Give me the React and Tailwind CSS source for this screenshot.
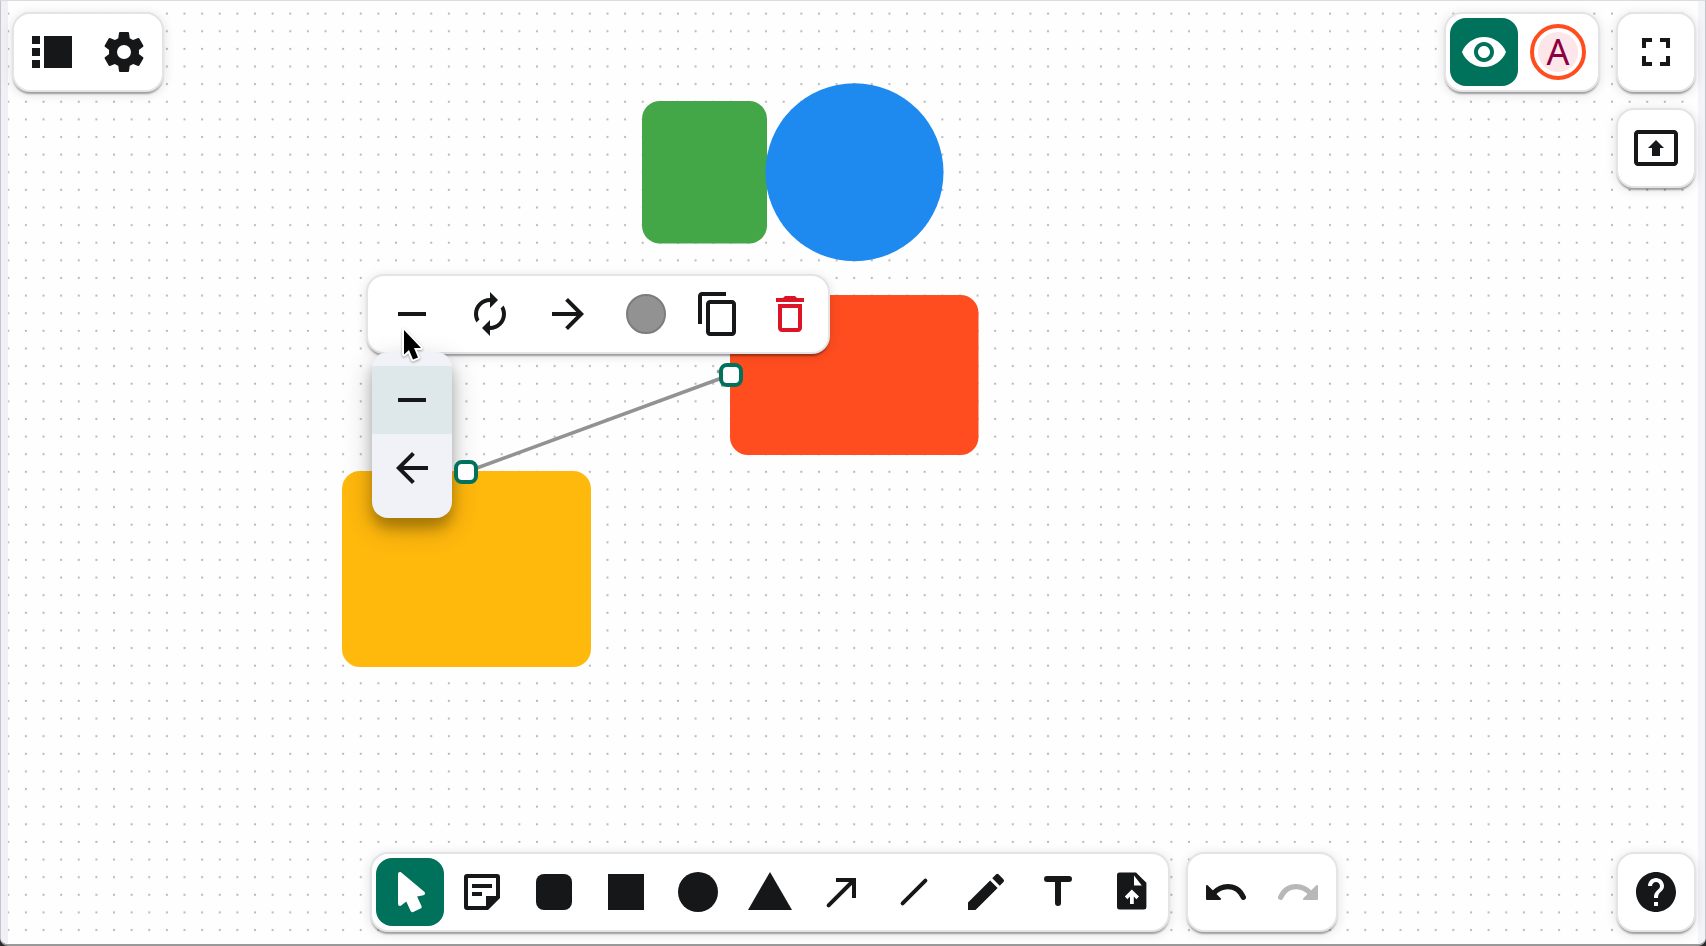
import React from "react";
import {
  MdVisibility, MdFullscreen, MdPresentToAll, MdRemove, MdAutorenew,
  MdArrowForward, MdArrowBack, MdContentCopy, MdDeleteOutline, MdEdit, MdHelp,
} from "react-icons/md";

function Glyph({ children, className = "" }) {
  return (
    <svg viewBox="0 0 24 24" fill="currentColor" aria-hidden="true" className={`size-12 ${className}`}>
      {children}
    </svg>
  );
}

const stroke = { fill: "none", stroke: "currentColor", strokeWidth: 2, strokeLinecap: "round" };

const SidebarIcon = () => (
  <Glyph>
    <path d="M2 4h4v4H2zM2 10h4v4H2zM2 16h4v4H2zM8 4h14v16H8z" />
  </Glyph>
);

const CogIcon = () => (
  <Glyph>
    <path d="M12,15.5A3.5,3.5 0 0,1 8.5,12A3.5,3.5 0 0,1 12,8.5A3.5,3.5 0 0,1 15.5,12A3.5,3.5 0 0,1 12,15.5M19.43,12.97C19.47,12.65 19.5,12.33 19.5,12C19.5,11.67 19.47,11.34 19.43,11L21.54,9.37C21.73,9.22 21.78,8.95 21.66,8.73L19.66,5.27C19.54,5.05 19.27,4.96 19.05,5.05L16.56,6.05C16.04,5.66 15.5,5.32 14.87,5.07L14.5,2.42C14.46,2.18 14.25,2 14,2H10C9.75,2 9.54,2.18 9.5,2.42L9.13,5.07C8.5,5.32 7.96,5.66 7.44,6.05L4.95,5.05C4.73,4.96 4.46,5.05 4.34,5.27L2.34,8.73C2.21,8.95 2.27,9.22 2.46,9.37L4.57,11C4.53,11.34 4.5,11.67 4.5,12C4.5,12.33 4.53,12.65 4.57,12.97L2.46,14.63C2.27,14.78 2.21,15.05 2.34,15.27L4.34,18.73C4.46,18.95 4.73,19.03 4.95,18.95L7.44,17.94C7.96,18.34 8.5,18.68 9.13,18.93L9.5,21.58C9.54,21.82 9.75,22 10,22H14C14.25,22 14.46,21.82 14.5,21.58L14.87,18.93C15.5,18.67 16.04,18.34 16.56,17.94L19.05,18.95C19.27,19.03 19.54,18.95 19.66,18.73L21.66,15.27C21.78,15.05 21.73,14.78 21.54,14.63L19.43,12.97Z" />
  </Glyph>
);

const PointerIcon = () => (
  <Glyph>
    <path d="M13.64,21.97C13.14,22.21 12.54,22 12.31,21.5L10.13,16.76L7.62,18.78C7.45,18.92 7.24,19 7,19A1,1 0 0,1 6,18V3A1,1 0 0,1 7,2C7.24,2 7.47,2.09 7.64,2.23L7.65,2.22L19.14,11.86C19.57,12.22 19.62,12.85 19.27,13.27C19.12,13.45 18.91,13.57 18.7,13.61L15.54,14.23L17.74,18.96C18,19.46 17.76,20.05 17.26,20.28L13.64,21.97Z" />
  </Glyph>
);

const NoteIcon = () => (
  <Glyph>
    <path
      fillRule="evenodd"
      d="M4.5 3h15A1.5 1.5 0 0 1 21 4.500V15l-6 6H4.500A1.500 1.500 0 0 1 3 19.500V4.500A1.500 1.500 0 0 1 4.500 3zM5 5v14h9v-5h5V5zM7 8h10v2H7zM7 12h5v2H7z"
    />
  </Glyph>
);

const RoundedIcon = () => <Glyph><rect x="3" y="3" width="18" height="18" rx="4" /></Glyph>;
const SquareIcon = () => <Glyph><path d="M3 3h18v18H3z" /></Glyph>;
const CircleIcon = () => <Glyph><circle cx="12" cy="12" r="10" /></Glyph>;
const TriangleIcon = () => <Glyph><path d="M1 21h22L12 2" /></Glyph>;

const ArrowIcon = () => (
  <Glyph>
    <path d="M9 5h10v10h-2V7H9z" />
    <path d="M5.300 18.700 17.500 6.500" {...stroke} />
  </Glyph>
);

const LineIcon = () => <Glyph><path d="M6.300 17.700 17.700 6.300" {...stroke} /></Glyph>;

const TextIcon = () => (
  <Glyph>
    <path d="M6.500 5.500h11M12 5.500v12" {...stroke} strokeWidth={3} />
  </Glyph>
);

const UploadIcon = () => (
  <Glyph>
    <path
      fillRule="evenodd"
      d="M6.700 2.200h8.300l5.200 5.200v12.200a1.200 1.200 0 0 1-1.200 1.200H6.700a1.200 1.200 0 0 1-1.200-1.200V3.400a1.200 1.200 0 0 1 1.200-1.200zM14 3.800v5h3.900zM12.900 10.800l-3.500 3.500 1.300 1.300 1.300-1.300V18h1.900v-3.700l1.300 1.300 1.300-1.300z"
    />
  </Glyph>
);

const UndoIcon = ({ className }) => (
  <Glyph className={className}>
    <path d="M2.500 9v6.500H9z" stroke="currentColor" strokeLinejoin="round" />
    <path d="M5.500 12.800C8 10.200 10.500 9.300 12.800 9.300c3.700 0 6.500 2.200 7.900 5.400" {...stroke} strokeWidth={2.600} />
  </Glyph>
);

function Panel({ className = "", label, children }) {
  return (
    <div
      role="toolbar"
      aria-label={label}
      className={`flex w-fit rounded-2xl bg-white p-1 shadow-[0_0_0_2px_#e4e4e8,0_3px_2px_1px_rgba(0,0,0,0.34),0_2px_12px_2px_rgba(0,0,0,0.12)] ${className}`}
    >
      {children}
    </div>
  );
}

function IconButton({ label, active = false, className = "", children, ...rest }) {
  return (
    <button
      type="button"
      aria-label={label}
      className={`flex size-17 shrink-0 items-center justify-center rounded-2xl ${active ? "bg-[#00715a] text-white" : ""} ${className}`}
      {...rest}
    >
      {children}
    </button>
  );
}

const tools = [
  ["Select", PointerIcon],
  ["Sticky note", NoteIcon],
  ["Rounded rectangle", RoundedIcon],
  ["Rectangle", SquareIcon],
  ["Circle", CircleIcon],
  ["Triangle", TriangleIcon],
  ["Arrow", ArrowIcon],
  ["Line", LineIcon],
  ["Pen", () => <MdEdit size={48} />],
  ["Text", TextIcon],
  ["Upload file", UploadIcon],
];

function Drawing() {
  return (
    <svg className="absolute inset-0 size-full" aria-hidden="true">
      <defs>
        <pattern id="dots" x="17.100" y="4.900" width="17.623" height="17.623" patternUnits="userSpaceOnUse">
          <circle cx="8.800" cy="8.800" r="1.100" fill="#b4b4b4" />
        </pattern>
      </defs>
      <rect x="8" width="100%" height="100%" fill="url(#dots)" />
      <rect x="642" y="101" width="125" height="142.500" rx="18" fill="#43a647" />
      <circle cx="854.500" cy="172.300" r="89" fill="#1e8af0" />
      <rect x="730" y="295" width="248.500" height="160" rx="18" fill="#ff4d1f" />
      <rect x="342" y="471" width="249" height="196" rx="18" fill="#ffb80c" />
      <path d="M466 472 730 375" stroke="#929292" strokeWidth="3.500" />
      <path d="M718.500 371.500 730 375 722.500 385" fill="none" stroke="#929292" strokeWidth="3.500" strokeLinecap="round" />
    </svg>
  );
}

function Selection() {
  return (
    <>
      <div className="absolute left-[368px] top-[276px]">
        <Panel label="Connector" className="gap-1">
          <div className="flex gap-2.5 pl-1.5">
            <IconButton label="Line start" aria-expanded="true"><MdRemove size={48} /></IconButton>
            <IconButton label="Line shape"><MdAutorenew size={48} /></IconButton>
            <IconButton label="Line end"><MdArrowForward size={48} /></IconButton>
            <IconButton label="Colour">
              <span className="size-10 rounded-full border-2 border-[#7c7c7c] bg-[#929292]" />
            </IconButton>
          </div>
          <IconButton label="Duplicate"><MdContentCopy size={48} /></IconButton>
          <IconButton label="Delete" className="text-[#dc1426]"><MdDeleteOutline size={48} /></IconButton>
        </Panel>
      </div>
      <div
        role="menu"
        aria-label="Line start"
        className="absolute left-[372px] top-[352px] flex w-20 flex-col rounded-2xl bg-[#f1f2f7] pb-4 pt-3.5 shadow-[0_10px_12px_rgba(0,0,0,0.2),0_10px_28px_rgba(0,0,0,0.24)]"
      >
        <button type="button" role="menuitem" aria-label="None" className="flex h-17 items-center justify-center bg-[#dee7ea]">
          <MdRemove size={48} />
        </button>
        <button type="button" role="menuitem" aria-label="Arrow" className="flex h-17 items-center justify-center">
          <MdArrowBack size={48} />
        </button>
      </div>
      <span className="absolute left-[454px] top-[460px] size-6 rounded-lg border-4 border-[#00715a] bg-white" />
      <span className="absolute left-[719px] top-[363px] size-6 rounded-lg border-4 border-[#00715a] bg-white" />
      <svg viewBox="0 0 26 40" className="absolute left-[400px] top-[325px] h-10 w-[26px] drop-shadow-[0_1px_1px_rgba(0,0,0,0.35)]" aria-hidden="true">
        <path
          d="M4 5v24.500l5-4.500 4 9.500 5-2-4-9.500h7z"
          fill="#000"
          stroke="#fff"
          strokeWidth="4"
          strokeLinejoin="round"
          paintOrder="stroke"
        />
      </svg>
    </>
  );
}

export default function App() {
  return (
    <div className="bg-[#2a2a2a]">
      <div className="relative flex min-h-screen flex-col justify-between overflow-hidden rounded-b-lg border-b-2 border-l border-r border-t border-b-[#999] border-l-[#c4c4cc] border-r-[#c4c4cc] border-t-[#dcdcdf] bg-[#fefefe] font-[Roboto,sans-serif] text-[#151718]">
        <main aria-label="Whiteboard" className="absolute -left-px -top-px h-screen w-screen">
          <Drawing />
          <Selection />
        </main>
        <div className="pointer-events-none absolute inset-y-0 left-0 w-[7px] bg-[#f0f0f6]" />
        <div className="pointer-events-none absolute inset-y-0 right-0 w-[7px] bg-[#f3f3f9]" />

        <header className="relative flex items-start justify-between pl-[13px] pr-[11px] pt-[13px]">
          <Panel label="Board" className="gap-1">
            <IconButton label="Pages"><SidebarIcon /></IconButton>
            <IconButton label="Settings"><CogIcon /></IconButton>
          </Panel>
          <div className="flex items-start gap-5">
            <Panel label="People" className="gap-1">
              <IconButton label="Show cursors" active><MdVisibility size={48} /></IconButton>
              <button type="button" className="flex h-17 w-18 items-center justify-center">
                <span className="flex size-14 items-center justify-center rounded-full border-4 border-[#ff4d1f] p-1">
                  <span className="flex size-10 items-center justify-center rounded-full bg-[#fde6ea] font-['Noto_Sans',sans-serif] text-4xl text-[#8c0040]">A</span>
                </span>
              </button>
            </Panel>
            <div className="flex flex-col gap-5">
              <Panel label="View"><IconButton label="Full screen"><MdFullscreen size={48} /></IconButton></Panel>
              <Panel label="Present"><IconButton label="Present to all"><MdPresentToAll size={48} /></IconButton></Panel>
            </div>
          </div>
        </header>

        <footer className="relative grid grid-cols-[1fr_auto_1fr] pb-[14px] pl-[13px] pr-[11px]">
          <div className="col-start-2 flex gap-5">
            <Panel label="Tools" className="gap-1">
              {tools.map(([label, Icon], i) => (
                <IconButton key={label} label={label} active={i === 0} aria-pressed={i === 0}>
                  <Icon />
                </IconButton>
              ))}
            </Panel>
            <Panel label="History" className="gap-1">
              <IconButton label="Undo"><UndoIcon /></IconButton>
              <IconButton label="Redo" disabled><UndoIcon className="-scale-x-100 text-[#b8b8b8]" /></IconButton>
            </Panel>
          </div>
          <Panel label="Help" className="justify-self-end">
            <IconButton label="Help"><MdHelp size={48} /></IconButton>
          </Panel>
        </footer>
      </div>
    </div>
  );
}
